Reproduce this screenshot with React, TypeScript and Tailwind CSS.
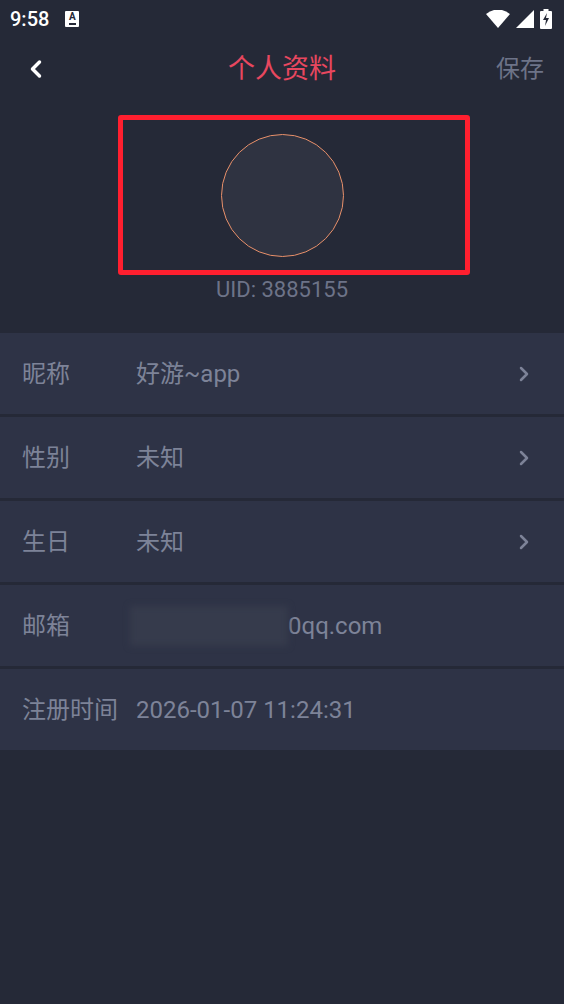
import { ChevronLeft, ChevronRight } from 'lucide-react';

const rows = [
    { label: '昵称', value: '好游~app', arrow: true },
    { label: '性别', value: '未知', arrow: true },
    { label: '生日', value: '未知', arrow: true },
    { label: '邮箱', value: 'email', arrow: false },
    { label: '注册时间', value: '2026-01-07 11:24:31', arrow: false },
];

function StatusBar() {
    return (
        <div className="h-[38px] flex items-center justify-between pl-[10px] pr-[12px] text-white">
            <div className="flex items-center gap-[16px]">
                <span className="text-[20px] font-medium leading-none">9:58</span>
                <div className="w-[14px] h-[16px] bg-white rounded-[1px] flex flex-col items-center justify-start pt-[1px]">
                    <span className="text-[10px] font-bold leading-none text-[#252937]">A</span>
                    <span className="w-[7px] h-[2px] mt-[1px] bg-[#252937]" />
                </div>
            </div>
            <div className="flex items-center gap-[6px]">
                <svg width="24" height="18" viewBox="0 0 24 18">
                    <path d="M12 18 L0 4 Q12 -5 24 4 Z" fill="white" />
                </svg>
                <svg width="18" height="18" viewBox="0 0 18 18">
                    <path d="M18 0 L18 18 L0 18 Z" fill="white" />
                </svg>
                <svg width="12" height="20" viewBox="0 0 12 20">
                    <rect x="3.5" y="0" width="5" height="2" fill="white" />
                    <rect x="0" y="2" width="12" height="18" rx="1" fill="white" />
                    <path d="M7 4 L3 11 L6 11 L5 17 L9 9 L6 9 Z" fill="#252937" />
                </svg>
            </div>
        </div>
    );
}

export default function App() {
    return (
        <div className="w-[564px] h-[1004px] bg-[#252937] overflow-hidden" style={{ fontFamily: 'Roboto, "Noto Sans CJK SC", sans-serif' }}>
            <StatusBar />

            <header className="h-[62px] flex items-center px-[22px]">
                <div className="flex-1">
                    <ChevronLeft className="w-[28px] h-[28px] text-white" strokeWidth={3} />
                </div>
                <h1 className="text-[27px] text-[#e8475f]">个人资料</h1>
                <div className="flex-1 flex justify-end">
                    <span className="text-[24px] text-[#6d7388] -mr-[2px]">保存</span>
                </div>
            </header>

            <div className="flex flex-col items-center pt-[15px]">
                <div className="ml-[24px] w-[352px] h-[160px] border-[5px] border-[#ff1f2f] rounded-[3px] flex items-center pl-[98px]">
                    <div className="w-[123px] h-[123px] rounded-full bg-[#2f3341] border border-[#e8906a]" />
                </div>
                <p className="mt-[2px] text-[22px] text-[#6d7388] leading-[26px]">UID: 3885155</p>
            </div>

            <div className="mt-[30px] flex flex-col gap-[3px]">
                {rows.map((row) => (
                    <div key={row.label} className="h-[81px] bg-[#2e3346] flex items-center pl-[22px] pr-[28px]">
                        <span className="w-[114px] text-[24px] text-[#7d8398]">{row.label}</span>
                        <div className="flex-1 text-[24px] text-[#7d8398]">
                            {row.value === 'email' ? (
                                <div className="flex items-center">
                                    <span className="w-[158px] h-[40px] bg-[#363b4c] blur-[3px] -ml-[6px]" />
                                    <span>0qq.com</span>
                                </div>
                            ) : (
                                row.value
                            )}
                        </div>
                        {row.arrow && <ChevronRight className="w-[24px] h-[24px] text-[#7d8398]" strokeWidth={2.5} />}
                    </div>
                ))}
            </div>
        </div>
    );
}
